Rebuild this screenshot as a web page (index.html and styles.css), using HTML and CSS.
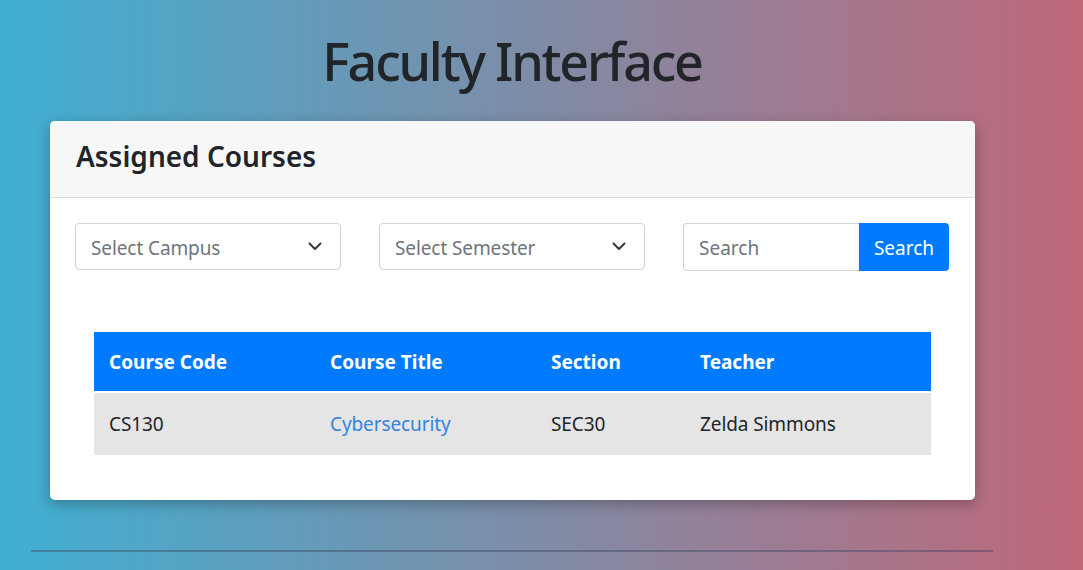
FILE: index.html
```html
<!DOCTYPE html>
<html lang="en">
<head>
<meta charset="utf-8">
<title>Faculty Interface</title>
<link rel="stylesheet" href="styles.css">
</head>
<body>
<div class="page">
  <h1 class="title">Faculty Interface</h1>
  <div class="card">
    <div class="card-header">
      <h2 class="card-title">Assigned Courses</h2>
    </div>
    <div class="card-body">
      <div class="filters">
        <div class="select">
          <span class="select-text">Select Campus</span>
          <svg class="chev" width="14" height="9" viewBox="0 0 14 9"><path d="M1.5 1.5 L7 7 L12.5 1.5" fill="none" stroke="#343a40" stroke-width="2" stroke-linecap="round" stroke-linejoin="round"/></svg>
        </div>
        <div class="select">
          <span class="select-text">Select Semester</span>
          <svg class="chev" width="14" height="9" viewBox="0 0 14 9"><path d="M1.5 1.5 L7 7 L12.5 1.5" fill="none" stroke="#343a40" stroke-width="2" stroke-linecap="round" stroke-linejoin="round"/></svg>
        </div>
        <div class="search-group">
          <div class="search-input">Search</div>
          <button class="search-btn">Search</button>
        </div>
      </div>
      <div class="table-wrap">
        <table class="courses">
          <thead>
            <tr><th class="c1">Course Code</th><th class="c2">Course Title</th><th class="c3">Section</th><th class="c4">Teacher</th></tr>
          </thead>
          <tbody>
            <tr><td>CS130</td><td><a class="link" href="#">Cybersecurity</a></td><td>SEC30</td><td>Zelda Simmons</td></tr>
          </tbody>
        </table>
      </div>
    </div>
  </div>
  <div class="rule"></div>
</div>
</body>
</html>
```
FILE: styles.css
```css
html, body {
  margin: 0;
  padding: 0;
}
body {
  min-height: 570px;
  background: linear-gradient(to right, #3fafd2, #c0687a);
  font-family: "Noto Sans", "Open Sans", "DejaVu Sans", sans-serif;
  color: #212529;
  overflow: hidden;
}
.page {
  width: 962px;
  margin-left: 31px;
  padding-top: 29px;
}
.title {
  margin: 0;
  text-align: center;
  font-size: 52px;
  font-weight: 500;
  line-height: 64px;
  color: #212529;
  letter-spacing: -2.2px;
}
.card {
  margin: 28px 18px 0 19px;
  background: #fff;
  border-radius: 5px;
  box-shadow: 0 4px 14px rgba(0, 0, 0, 0.28);
  overflow: hidden;
}
.card-header {
  height: 77px;
  box-sizing: border-box;
  background: #f7f7f7;
  border-bottom: 1px solid #dcdcdc;
  display: flex;
  align-items: center;
  padding: 0 26px 6px 26px;
}
.card-title {
  margin: 0;
  font-size: 28px;
  font-weight: 600;
  color: #212529;
}
.card-body {
  padding: 25px 25px 45px 25px;
}
.filters {
  display: grid;
  grid-template-columns: 266px 266px 266px;
  column-gap: 38px;
}
.select {
  height: 47px;
  box-sizing: border-box;
  border: 1px solid #ced4da;
  border-radius: 4px;
  display: flex;
  align-items: center;
  justify-content: space-between;
  padding: 3px 18px 0 15px;
}
.select-text {
  font-size: 19px;
  color: #6c757d;
  letter-spacing: -0.1px;
}
.chev {
  margin-top: -4px;
}
.search-group {
  display: flex;
  height: 48px;
}
.search-input {
  flex: 1;
  box-sizing: border-box;
  border: 1px solid #ced4da;
  border-right: none;
  border-radius: 4px 0 0 4px;
  display: flex;
  align-items: center;
  padding: 2px 0 0 15px;
  font-size: 19px;
  color: #6c757d;
}
.search-btn {
  width: 90px;
  border: none;
  background: #007bff;
  color: #fff;
  font-family: inherit;
  font-size: 19px;
  border-radius: 0 4px 4px 0;
  padding: 2px 0 0 0;
}
.table-wrap {
  margin: 61px 19px 0 19px;
}
.courses {
  width: 100%;
  border-collapse: collapse;
  font-size: 19px;
}
.courses th {
  background: #007bff;
  color: #fff;
  text-align: left;
  font-weight: 700;
  height: 60px;
  padding: 0 15px;
  box-sizing: border-box;
}
.courses td {
  background: #e5e5e5;
  height: 63px;
  padding: 0 15px;
  border-top: 2px solid #fff;
  box-sizing: border-box;
  letter-spacing: -0.1px;
}
.c1 { width: 221px; }
.c2 { width: 221px; }
.c3 { width: 149px; }
.link {
  color: #3483e0;
  text-decoration: none;
}
.rule {
  margin-top: 50px;
  height: 2px;
  background: rgba(60, 70, 100, 0.45);
}
```
